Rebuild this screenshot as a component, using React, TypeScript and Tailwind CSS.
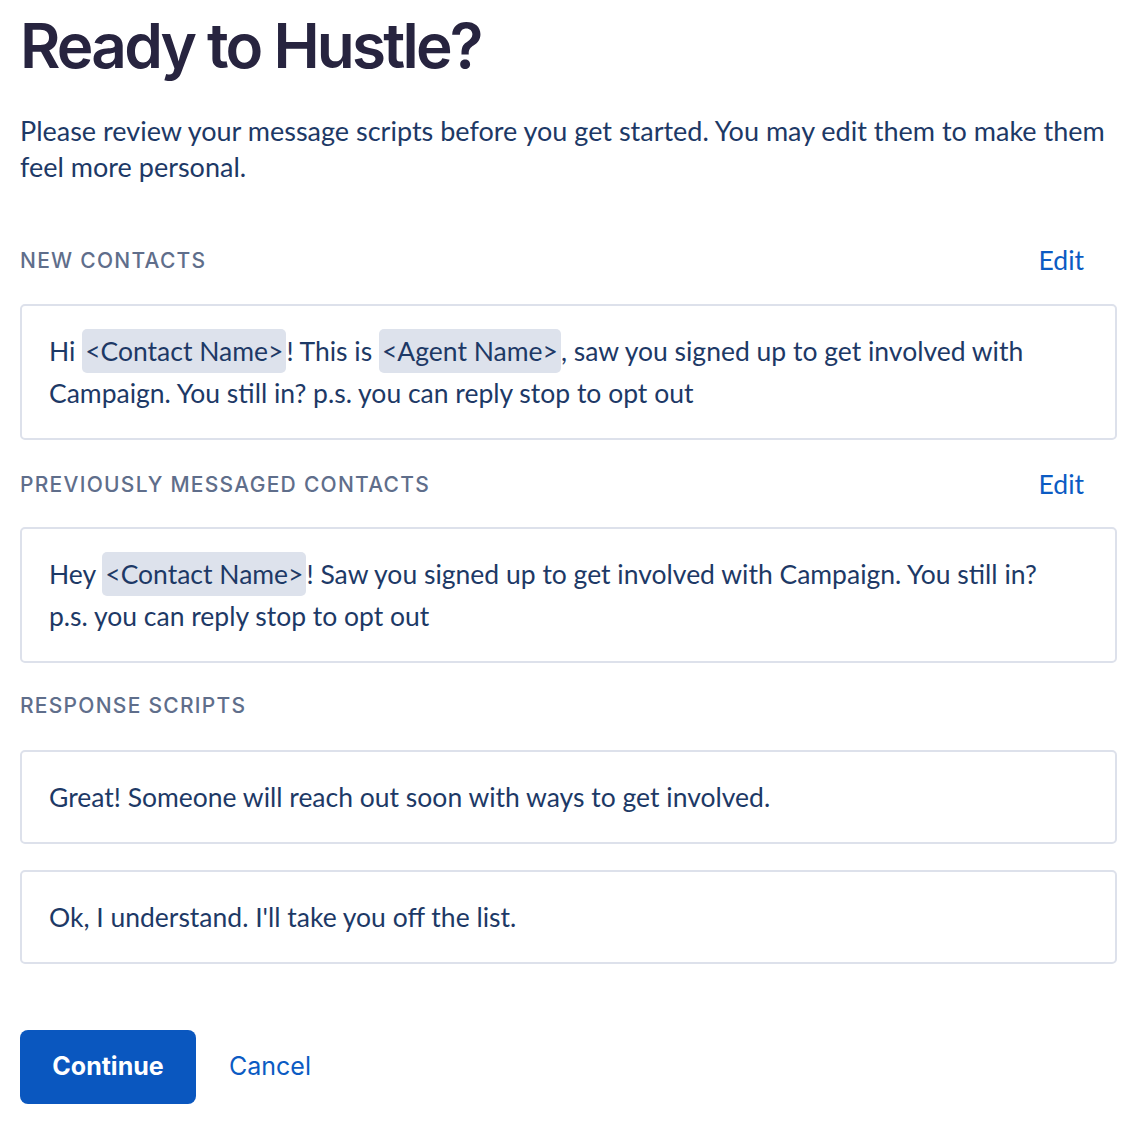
import React from 'react';

const Tag: React.FC<{ children: React.ReactNode }> = ({ children }) => (
  <span className="bg-[#dde2ec] rounded-[5px] px-[3px] py-[6px]">{children}</span>
);

const SectionHeader: React.FC<{ title: string; edit?: boolean }> = ({ title, edit }) => (
  <div className="flex items-center justify-between h-[44px]">
    <h2 className="text-[21px] tracking-[0.06em] uppercase text-[#5f6e8b] font-medium font-['Inter',sans-serif]">
      {title}
    </h2>
    {edit && (
      <button className="text-[26.5px] text-[#0b5bc3] pr-[33px] font-['Lato',sans-serif]">Edit</button>
    )}
  </div>
);

const ScriptBox: React.FC<{ children: React.ReactNode }> = ({ children }) => (
  <div className="border-2 border-[#dde1eb] rounded-[5px] pl-[27px] pr-[45px] py-[24px] text-[26.5px] leading-[42px] text-[#1d3966] font-['Lato',sans-serif]">
    {children}
  </div>
);

export default function App() {
  return (
    <div className="bg-white min-h-screen px-[20px] pr-[21px] pt-[6px] font-['Lato',sans-serif]">
      <h1 className="text-[62px] leading-[80px] font-semibold tracking-[-0.045em] text-[#27243f] font-['Inter',sans-serif]">
        Ready to Hustle?
      </h1>
      <p className="mt-[27px] text-[27px] leading-[36px] text-[#1d3966]">
        Please review your message scripts before you get started. You may edit them to make them feel more personal.
      </p>

      <div className="mt-[54px]">
        <SectionHeader title="New Contacts" edit />
        <div className="mt-[21px]">
          <ScriptBox>
            Hi <Tag>&lt;Contact Name&gt;</Tag>! This is <Tag>&lt;Agent Name&gt;</Tag>, saw you signed up to get involved
            with Campaign. You still in? p.s. you can reply stop to opt out
          </ScriptBox>
        </div>
      </div>

      <div className="mt-[23px]">
        <SectionHeader title="Previously Messaged Contacts" edit />
        <div className="mt-[20px]">
          <ScriptBox>
            Hey <Tag>&lt;Contact Name&gt;</Tag>! Saw you signed up to get involved with Campaign. You still in? p.s. you
            can reply stop to opt out
          </ScriptBox>
        </div>
      </div>

      <div className="mt-[21px]">
        <SectionHeader title="Response Scripts" />
        <div className="mt-[22px] flex flex-col gap-[26px]">
          <ScriptBox>Great! Someone will reach out soon with ways to get involved.</ScriptBox>
          <ScriptBox>Ok, I understand. I'll take you off the list.</ScriptBox>
        </div>
      </div>

      <div className="mt-[66px] flex items-center gap-[33px] pb-[30px]">
        <button className="bg-[#0a57bf] text-white rounded-[8px] w-[176px] h-[74px] text-[25px] font-bold font-['Inter',sans-serif]">
          Continue
        </button>
        <button className="text-[#0b5bc3] text-[25px] font-['Inter',sans-serif]">Cancel</button>
      </div>
    </div>
  );
}
